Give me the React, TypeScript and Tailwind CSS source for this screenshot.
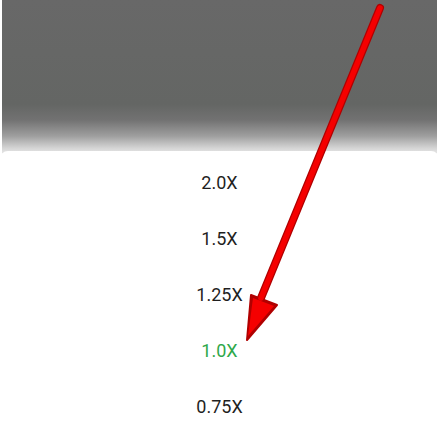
const speeds = ["2.0X", "1.5X", "1.25X", "1.0X", "0.75X"];
const current = "1.0X";

export default function App() {
  return (
    <div
      className="relative h-[426px] w-[439px] overflow-hidden bg-white"
      style={{ fontFamily: "Roboto, 'Noto Sans', sans-serif" }}
    >
      {/* dimmed video behind the sheet */}
      <div className="mx-[2px] h-[158px] bg-[linear-gradient(to_bottom,#686868_0%,#646664_66%,#727272_76%,#9e9e9e_86%,#d6d6d6_94%,#f4f4f4_100%)]" />

      {/* speed sheet */}
      <div className="absolute inset-x-0 top-[151px] bottom-0 rounded-t-[8px] bg-white pt-[3px]">
        <ul className="flex flex-col">
          {speeds.map((s) => (
            <li
              key={s}
              className={`flex h-[56px] items-center justify-center text-[18px] ${
                s === current ? "text-[#2ea84a]" : "text-[#1f1f1f]"
              }`}
            >
              {s}
            </li>
          ))}
        </ul>
      </div>

      {/* annotation arrow */}
      <svg
        className="pointer-events-none absolute inset-0"
        width="439"
        height="426"
        viewBox="0 0 439 426"
      >
        <line x1="380" y1="8" x2="261" y2="298" stroke="#b00000" strokeWidth="8" strokeLinecap="round" />
        <polygon points="247,340 251,295 277,305" fill="#b00000" stroke="#b00000" strokeWidth="2" strokeLinejoin="round" />
        <line x1="380" y1="8" x2="261" y2="298" stroke="#f50000" strokeWidth="5.5" strokeLinecap="round" />
        <polygon points="248,336 253,298 274,306" fill="#f50000" />
      </svg>
    </div>
  );
}
